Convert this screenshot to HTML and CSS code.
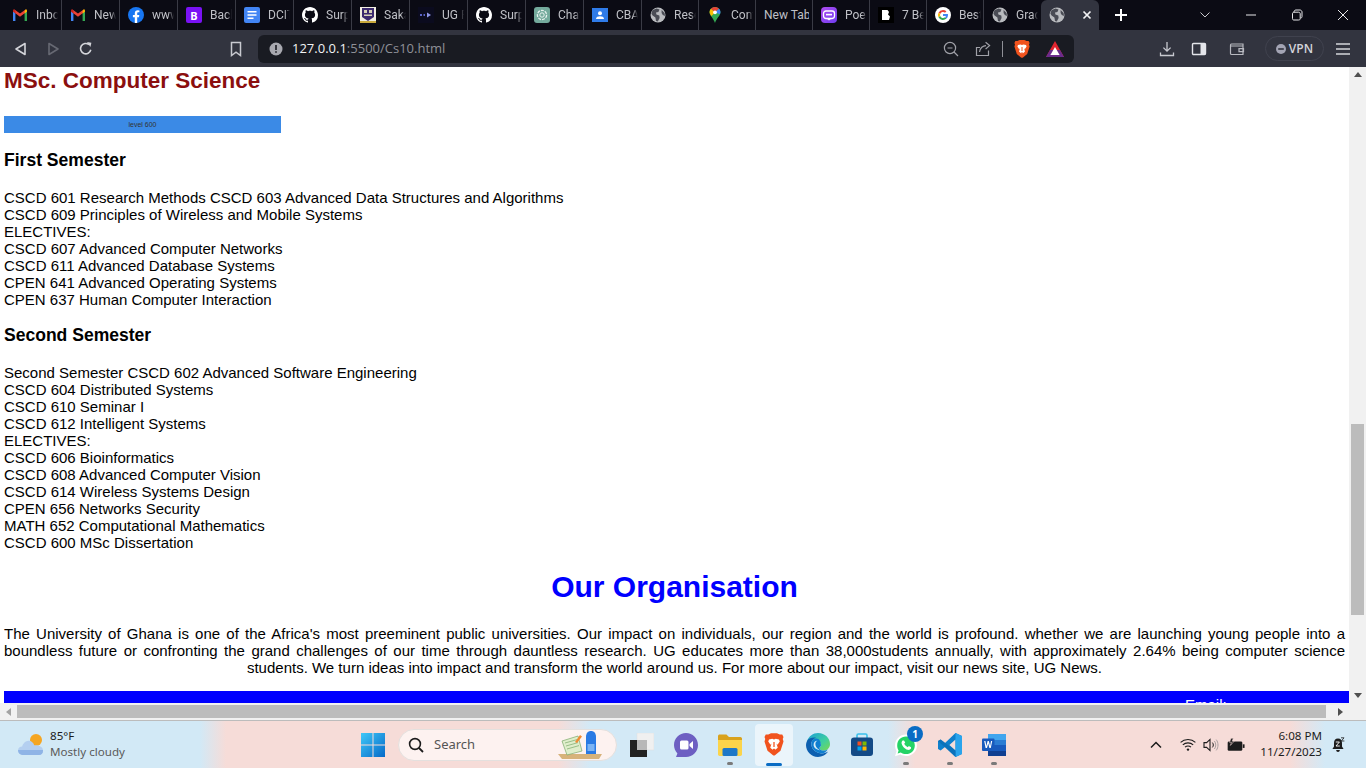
FILE: index.html
```html
<!DOCTYPE html>
<html lang="en">
<head>
<meta charset="utf-8">
<title>Cs10</title>
<link rel="stylesheet" href="styles.css">
</head>
<body>
<svg class="defs" width="0" height="0" aria-hidden="true">
  <symbol id="globe" viewBox="0 0 16 16"><circle cx="8" cy="8" r="7.5" fill="#b9bbbf"/><path d="M2.5 3.2 6.5 1.6 9.5 2.6 8.4 5 6 5.4 6.4 7.6 9.3 8.4 9.6 11 7.8 14.6 6 14 5.4 10.6 2.6 8.4 1.4 6.4Z M11.6 3 14.6 6 15 9 12.8 8 11.6 6Z" fill="#4a4c55"/></symbol>
  <symbol id="gmail" viewBox="0 0 16 14"><path d="M1 13V3.4L3.4 3V13H1Z" fill="#4285f4"/><path d="M12.6 13V3L15 3.4V13H12.6Z" fill="#34a853"/><path d="M1 3.6 2.4 1.4 8 5.6 13.6 1.4 15 3.6 8 8.8Z" fill="#ea4335"/><path d="M12.6 3 13.6 1.4C14.4.8 15 1.6 15 3.4L12.6 5.4Z" fill="#fbbc04"/><path d="M1 3.4C1 1.6 1.6.8 2.4 1.4L3.4 3V5.4L1 3.6Z" fill="#c5221f"/></symbol>
  <symbol id="github" viewBox="0 0 16 16"><path fill="#fff" d="M8 0C3.58 0 0 3.58 0 8c0 3.54 2.29 6.53 5.47 7.59.4.07.55-.17.55-.38 0-.19-.01-.82-.01-1.49-2.01.37-2.53-.49-2.69-.94-.09-.23-.48-.94-.82-1.13-.28-.15-.68-.52-.01-.53.63-.01 1.08.58 1.23.82.72 1.21 1.87.87 2.33.66.07-.52.28-.87.51-1.07-1.78-.2-3.64-.89-3.64-3.95 0-.87.31-1.59.82-2.15-.08-.2-.36-1.02.08-2.12 0 0 .67-.21 2.2.82.64-.18 1.32-.27 2-.27.68 0 1.36.09 2 .27 1.53-1.04 2.2-.82 2.2-.82.44 1.1.16 1.92.08 2.12.51.56.82 1.27.82 2.15 0 3.07-1.87 3.75-3.65 3.95.29.25.54.73.54 1.48 0 1.07-.01 1.93-.01 2.2 0 .21.15.46.55.38A8.013 8.013 0 0016 8c0-4.42-3.58-8-8-8z"/></symbol>
  <symbol id="brave" viewBox="0 0 16 18"><path d="M3.4 1 5.6 0H10.4L12.6 1 14.6.9 15.6 3 15 4.5 15.6 6.6 13.2 14 9 17.4C8.3 18 7.7 18 7 17.4L2.8 14 .4 6.6 1 4.5.4 3 1.4.9Z" fill="#f1531e"/><path d="M4 5 6.6 4.4 8 5 9.4 4.4 12 5 12.6 6.6 10.8 9.2 10 8.2 11 11.6 8.8 13.4H7.2L5 11.6 6 8.2 5.2 9.2 3.4 6.6Z" fill="#fff"/><path d="M6.8 13 8 12.2 9.2 13 8 14.6Z M7.5 7H8.5V11H7.5Z" fill="#f1531e"/></symbol>
</svg>

<header class="tabstrip">
  <div class="tab"><svg class="fav"><use href="#gmail"/></svg><span class="tab-title">Inbox (12)</span></div>
  <div class="tab"><svg class="fav"><use href="#gmail"/></svg><span class="tab-title">New Inbox</span></div>
  <div class="tab"><svg class="fav" viewBox="0 0 16 16"><circle cx="8" cy="8" r="8" fill="#1877f2"/><path d="M6.8 16V10.2H4.9V8H6.8V6.3C6.8 4.3 8 3.2 9.8 3.2L11.4 3.4V5.2H10.4C9.5 5.2 9.2 5.8 9.2 6.4V8H11.3L11 10.2H9.2V16Z" fill="#fff"/></svg><span class="tab-title">www.face</span></div>
  <div class="tab"><span class="fav fav-boot">B</span><span class="tab-title">Background</span></div>
  <div class="tab"><svg class="fav" viewBox="0 0 16 16"><rect width="16" height="16" rx="2" fill="#4285f4"/><path d="M3.5 4H12.5V5.6H3.5ZM3.5 7.2H12.5V8.8H3.5ZM3.5 10.4H9.5V12H3.5Z" fill="#fff"/></svg><span class="tab-title">DCIT 4</span></div>
  <div class="tab"><svg class="fav"><use href="#github"/></svg><span class="tab-title">Surprise</span></div>
  <div class="tab"><svg class="fav" viewBox="0 0 16 16"><rect width="16" height="16" fill="#f2efe2"/><path d="M2 1H14V10L8 14 2 10Z" fill="#3c2a6e"/><path d="M4 3H7V6H4ZM9 3H12V6H9ZM4 7.5H12V9H4Z" fill="#d8d2b8"/><rect y="14" width="16" height="2" fill="#c9a93c"/></svg><span class="tab-title">Sakai</span></div>
  <div class="tab"><svg class="fav" viewBox="0 0 16 16"><rect width="16" height="16" fill="#0b0b1e"/><path d="M2 7H4V9H2ZM5.5 7H7V9H5.5Z" fill="#5a63c8"/><path d="M9 5.6 13 8 9 10.4Z" fill="#8f96e8"/></svg><span class="tab-title">UG Portal</span></div>
  <div class="tab"><svg class="fav"><use href="#github"/></svg><span class="tab-title">Surprise</span></div>
  <div class="tab"><svg class="fav" viewBox="0 0 16 16"><rect width="16" height="16" rx="3" fill="#74aa9c"/><circle cx="8" cy="8" r="4.6" fill="none" stroke="#e8f2ef" stroke-width="1.3" stroke-dasharray="3 1"/><circle cx="8" cy="8" r="2.2" fill="none" stroke="#e8f2ef"/></svg><span class="tab-title">ChatGPT</span></div>
  <div class="tab"><svg class="fav" viewBox="0 0 16 16"><rect y="1" width="16" height="14" fill="#2f7be8"/><circle cx="8" cy="6.2" r="2" fill="#fff"/><path d="M4 12C4 9.8 6 9.2 8 9.2S12 9.8 12 12Z" fill="#fff"/></svg><span class="tab-title">CBAS</span></div>
  <div class="tab tab-n"><svg class="fav"><use href="#globe"/></svg><span class="tab-title">Research</span></div>
  <div class="tab tab-n"><svg class="fav" viewBox="0 0 16 16"><path d="M8 0C11 0 13.4 2.3 13.4 5.3 13.4 9 9.6 11 8 16 6.4 11 2.6 9 2.6 5.3 2.6 2.3 5 0 8 0Z" fill="#34a853"/><path d="M4 1.8 8 5.3 4.6 9C3.4 7.6 2.6 6.6 2.6 5.3 2.6 3.9 3.1 2.7 4 1.8Z" fill="#fbbc04"/><path d="M4 1.8C5 .7 6.4 0 8 0 9.6 0 11 .7 12 1.8L8 5.3Z" fill="#ea4335"/><path d="M12 1.8C12.9 2.7 13.4 3.9 13.4 5.3 13.4 6 13.2 6.6 12.9 7.2L8 5.3Z" fill="#4285f4"/><circle cx="8" cy="5.3" r="1.9" fill="#fff"/></svg><span class="tab-title">Contact</span></div>
  <div class="tab tab-n"><span class="tab-title tab-plain">New Tab</span></div>
  <div class="tab tab-n"><svg class="fav" viewBox="0 0 16 16"><defs><linearGradient id="poe" x1="0" y1="0" x2="1" y2="1"><stop offset="0" stop-color="#b04cf0"/><stop offset="1" stop-color="#6f3df0"/></linearGradient></defs><rect width="16" height="16" rx="4" fill="url(#poe)"/><rect x="2.5" y="4" width="11" height="7.5" rx="2.4" fill="none" stroke="#fff" stroke-width="1.3"/><rect x="5" y="6.8" width="6" height="1.6" fill="#fff"/><path d="M5.5 11.5H10.5L8 13.4Z" fill="#fff"/></svg><span class="tab-title">Poe</span></div>
  <div class="tab tab-n"><svg class="fav" viewBox="0 0 16 16"><rect width="16" height="16" fill="#000"/><path d="M4 3H9.5L11 5 10 7.5 12 9.5 11 13H4Z" fill="#fff"/></svg><span class="tab-title">7 Best</span></div>
  <div class="tab tab-n"><svg class="fav" viewBox="0 0 16 16"><circle cx="8" cy="8" r="8" fill="#fff"/><path d="M8 3A5 5 0 0 1 11.4 4.3L10 5.7A3 3 0 0 0 5.2 7L3.5 5.7A5 5 0 0 1 8 3Z" fill="#ea4335"/><path d="M3.5 5.7 5.2 7A3 3 0 0 0 5.2 9L3.5 10.3A5 5 0 0 1 3.5 5.7Z" fill="#fbbc04"/><path d="M3.5 10.3 5.2 9A3 3 0 0 0 10 10.3L11.5 11.6A5 5 0 0 1 3.5 10.3Z" fill="#34a853"/><path d="M13 8C13 9.6 12.4 10.8 11.5 11.6L10 10.3C10.5 9.9 10.8 9.4 10.9 8.9H8V7H12.9Z" fill="#4285f4"/></svg><span class="tab-title">Best web</span></div>
  <div class="tab tab-n tab-last"><svg class="fav"><use href="#globe"/></svg><span class="tab-title">Graduate</span></div>
  <div class="tab tab-active"><svg class="fav"><use href="#globe"/></svg><svg class="tab-close" viewBox="0 0 10 10"><path d="M1.5 1.5 8.5 8.5M8.5 1.5 1.5 8.5" stroke="#f2f2f4" stroke-width="1.7"/></svg></div>
  <svg class="new-tab" viewBox="0 0 14 14"><path d="M7 1V13M1 7H13" stroke="#fff" stroke-width="2"/></svg>
  <svg class="win-btn win-chevron" viewBox="0 0 12 12"><path d="M1.5 3.5 6 8 10.5 3.5" fill="none" stroke="#c8c9cc"/></svg>
  <svg class="win-btn win-min" viewBox="0 0 12 12"><path d="M1 6H11" stroke="#e8e8ea"/></svg>
  <svg class="win-btn win-max" viewBox="0 0 12 12"><path d="M3 3.5C3 2 3.5 1 5 1H9C10 1 11 2 11 3V7.5C11 8.5 10.5 9 9.5 9M1.5 5C1.5 3.8 2 3.2 3 3.2H7.6C8.6 3.2 9.2 3.8 9.2 5V9.6C9.2 10.6 8.6 11 7.6 11H3C2 11 1.5 10.6 1.5 9.6Z" fill="none" stroke="#e8e8ea"/></svg>
  <svg class="win-btn win-close" viewBox="0 0 12 12"><path d="M1 1 11 11M11 1 1 11" stroke="#e8e8ea"/></svg>
</header>

<nav class="toolbar">
  <button class="tb-btn"><svg viewBox="0 0 16 16"><path d="M12 2.5V13.5L3 8Z" fill="none" stroke="#d4d5da" stroke-width="1.6" stroke-linejoin="round"/></svg></button>
  <button class="tb-btn"><svg viewBox="0 0 16 16"><path d="M4 2.5V13.5L13 8Z" fill="none" stroke="#676973" stroke-width="1.6" stroke-linejoin="round"/></svg></button>
  <button class="tb-btn tb-reload"><svg viewBox="0 0 16 16"><path d="M12.8 8.8A5.2 5.2 0 1 1 11 3.6" fill="none" stroke="#d4d5da" stroke-width="1.6"/><path d="M9 1 13.4 1.8 12.4 6Z" fill="#d4d5da"/></svg></button>
  <button class="tb-btn tb-bookmark"><svg viewBox="0 0 16 16"><path d="M3.5 1.5H12.5V14.5L8 11.2 3.5 14.5Z" fill="none" stroke="#c8c9d0" stroke-width="1.5"/></svg></button>
  <div class="urlbar">
    <svg class="url-info" viewBox="0 0 14 14"><circle cx="7" cy="7" r="6.5" fill="#a8a9b0"/><path d="M6.2 3H7.8V8H6.2ZM6.2 9.2H7.8V10.8H6.2Z" fill="#191b22"/></svg>
    <span class="url-text"><span class="url-host">127.0.0.1</span>:5500/Cs10.html</span>
    <svg class="url-ic url-zoom" viewBox="0 0 16 16"><circle cx="7" cy="7" r="5.6" fill="none" stroke="#a0a1a8" stroke-width="1.2"/><path d="M4.5 7H9.5M11 11 15 15" stroke="#a0a1a8" stroke-width="1.2"/></svg>
    <svg class="url-ic url-share" viewBox="0 0 16 16"><path d="M13.5 9.5V14.5H1.5V6.5H5" fill="none" stroke="#a0a1a8" stroke-width="1.2"/><path d="M4.5 11C5 7 8 4.6 11 4.6M10.6 1.2 14.6 4.6 10.6 8" fill="none" stroke="#a0a1a8" stroke-width="1.2"/></svg>
    <span class="url-sep"></span>
    <svg class="url-brave"><use href="#brave"/></svg>
    <svg class="url-bat" viewBox="0 0 18 16"><path d="M9 0 18 16H0Z" fill="#e0252f"/><path d="M0 16 4 9H14L18 16Z" fill="#6a2b8c"/><path d="M9 6 13.6 14H4.4Z" fill="#fff"/></svg>
  </div>
  <button class="tb-btn tb-download"><svg viewBox="0 0 16 16"><path d="M8 1V10M4.4 6.6 8 10.2 11.6 6.6M1.5 11.5V14.5H14.5V11.5" fill="none" stroke="#c8c9d0" stroke-width="1.3"/></svg></button>
  <button class="tb-btn"><svg viewBox="0 0 16 16"><rect x="1.5" y="2.5" width="13" height="11" rx="1" fill="none" stroke="#e4e5ea" stroke-width="1.4"/><rect x="9.5" y="2.5" width="5" height="11" fill="#e4e5ea"/></svg></button>
  <button class="tb-btn tb-wallet"><svg viewBox="0 0 16 16"><path d="M14 5V3H2.5C1.5 3 1.5 4 1.5 5V12.5C1.5 13.3 2 13.5 2.6 13.5H14V5H2" fill="none" stroke="#b8b9c0" stroke-width="1.2"/><path d="M10 7.6H14.5V10.6H10Z" fill="none" stroke="#b8b9c0" stroke-width="1.2"/></svg></button>
  <div class="vpn"><svg class="vpn-dot" viewBox="0 0 10 10"><circle cx="5" cy="5" r="5" fill="#a3a4b4"/><rect x="2.2" y="4.2" width="5.6" height="1.6" fill="#32343f"/></svg>VPN</div>
  <button class="tb-btn tb-menu"><svg viewBox="0 0 16 16"><path d="M1 3H15M1 8H15M1 13H15" stroke="#d4d5da" stroke-width="1.4"/></svg></button>
</nav>

<div class="viewport">
  <main class="page">
    <h1 class="degree">MSc. Computer Science</h1>
    <div class="level">level 600</div>
    <h3 class="sem sem-first">First Semester</h3>
    <p class="courses">CSCD 601 Research Methods CSCD 603 Advanced Data Structures and Algorithms<br>
    CSCD 609 Principles of Wireless and Mobile Systems<br>
    ELECTIVES:<br>
    CSCD 607 Advanced Computer Networks<br>
    CSCD 611 Advanced Database Systems<br>
    CPEN 641 Advanced Operating Systems<br>
    CPEN 637 Human Computer Interaction</p>
    <h3 class="sem sem-second">Second Semester</h3>
    <p class="courses">Second Semester CSCD 602 Advanced Software Engineering<br>
    CSCD 604 Distributed Systems<br>
    CSCD 610 Seminar I<br>
    CSCD 612 Intelligent Systems<br>
    ELECTIVES:<br>
    CSCD 606 Bioinformatics<br>
    CSCD 608 Advanced Computer Vision<br>
    CSCD 614 Wireless Systems Design<br>
    CPEN 656 Networks Security<br>
    MATH 652 Computational Mathematics<br>
    CSCD 600 MSc Dissertation</p>
    <h2 class="org">Our Organisation</h2>
    <p class="about">The University of Ghana is one of the Africa's most preeminent public universities. Our impact on individuals, our region and the world is profound. whether we are launching young people into a boundless future or confronting the grand challenges of our time through dauntless research. UG educates more than 38,000students annually, with approximately 2.64% being computer science students. We turn ideas into impact and transform the world around us. For more about our impact, visit our news site, UG News.</p>
    <footer class="foot"><span class="foot-email">Email:</span></footer>
  </main>
  <div class="vscroll">
    <span class="arrow arrow-up"></span>
    <span class="vthumb"></span>
    <span class="arrow arrow-down"></span>
  </div>
</div>
<div class="hscroll">
  <span class="arrow arrow-left"></span>
  <span class="hthumb"></span>
  <span class="arrow arrow-right"></span>
  <span class="corner"></span>
</div>

<footer class="taskbar">
  <div class="weather">
    <svg class="weather-ic" viewBox="0 0 26 22"><circle cx="18" cy="6" r="6" fill="#f5a623"/><path d="M6 21C2 21 0 19 0 16.4 0 14 2 12.4 4.2 12.4 5 9.6 7.6 6.6 11 6.8 14 7 15.8 9.4 16.2 11.4 19 10.8 25 12 25 16.6 25 19.6 23.6 21 21 21Z" fill="#b4cff0"/><path d="M0 16H25L25 16.6C25 19.6 23.6 21 21 21H6C2 21 0 19 0 16Z" fill="#8fb4e6"/></svg>
    <div class="weather-text"><span class="temp">85°F</span><span class="cond">Mostly cloudy</span></div>
  </div>
  <div class="slot"><svg class="ic24" viewBox="0 0 24 24"><defs><linearGradient id="winb" x1="0" y1="0" x2="1" y2="1"><stop offset="0" stop-color="#3fc8f8"/><stop offset="1" stop-color="#0569c8"/></linearGradient></defs><path d="M0 0H11.5V11.5H0ZM12.5 0H24V11.5H12.5ZM0 12.5H11.5V24H0ZM12.5 12.5H24V24H12.5Z" fill="url(#winb)"/></svg></div>
  <div class="search">
    <svg class="search-ic" viewBox="0 0 16 16"><circle cx="7" cy="7" r="5.4" fill="none" stroke="#1c1c1c" stroke-width="1.6"/><path d="M11 11 15 15" stroke="#1c1c1c" stroke-width="1.8"/></svg>
    <span class="search-text">Search</span>
    <svg class="search-art" viewBox="0 0 44 30"><path d="M0 24H44L41 29H4Z" fill="#d7b27a"/><path d="M4 11 20 6 24 21 9 25Z" fill="#dfeecb" stroke="#7aa868" stroke-width=".7"/><path d="M7 13 19 9.6M8 16 20 12.6M9 19 21 15.6" stroke="#7aa868" stroke-width=".7"/><path d="M17 12 22 5 24 6.4 19 13Z" fill="#f08a34"/><path d="M28 7C28 3 30 1 33 1S38 3 38 7V24H28Z" fill="#2a7ae4"/><rect x="29.5" y="14" width="7" height="7" fill="#7db4f4"/></svg>
  </div>
  <div class="slot slot-first"><svg class="ic24" viewBox="0 0 24 24"><rect x="7" y="0" width="17" height="17" fill="#f0f0f0" stroke="#dedede" stroke-width=".5"/><rect x="0" y="7" width="17" height="17" fill="#222"/><rect x="7" y="7" width="10" height="10" fill="#b8b8b8"/></svg></div>
  <div class="slot"><svg class="ic24" viewBox="0 0 24 24"><path d="M12 0C18.6 0 24 5.2 24 12S18.6 24 12 24H2L3.4 20.4C1.2 18 0 15.2 0 12 0 5.2 5.4 0 12 0Z" fill="#6d5fc2"/><rect x="6" y="7.5" width="8.5" height="9" rx="1.5" fill="#fff"/><path d="M15.5 11 19 8V16L15.5 13Z" fill="#fff"/></svg></div>
  <div class="slot"><svg class="ic24" viewBox="0 0 24 24"><path d="M0 3C0 2 .8 1.4 1.6 1.4H8.4L11 4H22.4C23.2 4 24 4.8 24 5.6V8H0Z" fill="#d9a21d"/><path d="M0 7H24V21.6C24 22.4 23.2 23 22.4 23H1.6C.8 23 0 22.4 0 21.6Z" fill="#fbd44a"/><rect x="4.5" y="15" width="15" height="8" rx="1.5" fill="#1d78c8"/></svg><span class="dot"></span></div>
  <div class="slot slot-active"><svg class="ic-brave"><use href="#brave"/></svg><span class="active-bar"></span></div>
  <div class="slot"><svg class="ic24" viewBox="0 0 24 24"><defs><linearGradient id="edge" x1="0" y1="0" x2="1" y2="1"><stop offset="0" stop-color="#1a9fd8"/><stop offset=".6" stop-color="#3fcf9e"/><stop offset="1" stop-color="#7ad84e"/></linearGradient></defs><path d="M1 8C3 3 7 0 12 0 19 0 24 5 24 11 24 15 21 17.6 18 17.6 15.4 17.6 13.6 16.6 13.4 15 13.4 14 14.6 13.6 15 12.4 15.4 10 13 7.4 10 7.4 6 7.4 3 7.6 1 8Z" fill="url(#edge)"/><path d="M1 8C3 5 7 4.2 10 4.8 7 5.6 5 8.6 5.4 12 6 17 11 20.4 16 20.4 18.4 20.4 20.4 19.8 22 18.6 20 22 16 24 12 24 5 24 0 18 0 12 0 10.6.4 9.2 1 8Z" fill="#0c5fb0"/><path d="M5.4 12C5 8.6 7 5.6 10 5.4 13 5.2 15 8 15 12.4 14.6 13.6 13.4 14 13.4 15 13.6 16.6 15.4 17.6 18 17.6 19.4 17.6 20.8 17 22 16 20 19 18.4 20.4 16 20.4 11 20.4 6 17 5.4 12Z" fill="#0f7ed0"/><path d="M7.6 12C7.6 9 9.6 7.6 11.4 7.8 9.6 8.6 9 10.6 9.6 12.6 10.2 14.6 12 16.4 14 17.2 10.6 16.8 7.6 14.6 7.6 12Z" fill="#d6ecf6"/></svg></div>
  <div class="slot"><svg class="ic24" viewBox="0 0 24 24"><path d="M7 5V2.4C7 1.4 7.6 1 8.4 1H15.6C16.4 1 17 1.4 17 2.4V5" fill="none" stroke="#3ac0ec" stroke-width="1.6"/><rect x="1" y="4.5" width="22" height="18.5" rx="3" fill="#134a86"/><rect x="7.5" y="8.5" width="4" height="4" fill="#f25022"/><rect x="12.5" y="8.5" width="4" height="4" fill="#7fba00"/><rect x="7.5" y="13.5" width="4" height="4" fill="#00a4ef"/><rect x="12.5" y="13.5" width="4" height="4" fill="#ffb900"/></svg></div>
  <div class="slot"><svg class="ic24" viewBox="0 0 24 24"><path d="M12 1.5C18 1.5 23 6.4 23 12.4S18 23 12 23C10 23 8.2 22.6 6.4 21.6L1 23.2 2.6 18C1.6 16.2 1 14.4 1 12.4 1 6.4 6 1.5 12 1.5Z" fill="#fff"/><path d="M12 3.6C17 3.6 20.8 7.4 20.8 12.4S17 21 12 21C10 21 8.4 20.4 6.8 19.4L3.6 20.4 4.6 17.4C3.6 15.8 3.2 14.2 3.2 12.4 3.2 7.4 7 3.6 12 3.6Z" fill="#25d366"/><path d="M8.6 7.4C8 8 7.4 9 7.6 10.4 8 12.6 10.6 15.8 13.6 16.8 15 17.2 16.2 16.8 17 15.6L17 14.2 14.8 13 13.8 14.2C12.4 13.8 10.8 12 10.2 10.8L11.2 9.6 10 7.4Z" fill="#fff"/></svg><span class="badge">1</span><span class="dot"></span></div>
  <div class="slot"><svg class="ic24" viewBox="0 0 24 24"><path d="M17.5 0 24 3V21L17.5 24 7 14 2.6 17.4 0 16V8L2.6 6.6 7 10ZM17.5 6.6 11.4 12 17.5 17.4Z" fill="#0f80cc"/><path d="M17.5 0 24 3V21L17.5 24Z" fill="#2aa4ec"/><path d="M0 8 2.6 6.6 17.5 17.4V24L0 8Z" fill="#0b6cb4" opacity=".7"/></svg><span class="dot"></span></div>
  <div class="slot"><svg class="ic24" viewBox="0 0 24 24"><rect x="6" y="1" width="18" height="22" rx="1" fill="#2b7cd3"/><rect x="6" y="1" width="18" height="6" fill="#41a5ee"/><rect x="6" y="12" width="18" height="6" fill="#185abd"/><rect x="6" y="18" width="18" height="5" fill="#103f91"/><rect x="0" y="5.5" width="12.5" height="12.5" rx="1" fill="#185abd"/><path d="M2.2 8 3.6 15H5L6.2 10.6 7.4 15H8.8L10.2 8H9L8.1 13 6.8 8H5.6L4.4 13 3.4 8Z" fill="#fff"/></svg><span class="dot"></span></div>
  <div class="tray">
    <svg class="tray-caret" viewBox="0 0 12 8"><path d="M1 6.5 6 1.5 11 6.5" fill="none" stroke="#1c1c1c" stroke-width="1.5"/></svg>
    <svg class="tray-wifi" viewBox="0 0 16 13"><path d="M.6 4.4C4.6.6 11.4.6 15.4 4.4M2.8 6.8C5.6 4.2 10.4 4.2 13.2 6.8M5 9.2C6.6 7.8 9.4 7.8 11 9.2" fill="none" stroke="#1c1c1c" stroke-width="1.1"/><circle cx="8" cy="11.6" r="1.2" fill="#1c1c1c"/></svg>
    <svg class="tray-vol" viewBox="0 0 16 14"><path d="M1 4.6H3.6L7 1.4V12.6L3.6 9.4H1Z" fill="none" stroke="#1c1c1c" stroke-width="1.1"/><path d="M9.4 4.6C10.6 6 10.6 8 9.4 9.4" fill="none" stroke="#1c1c1c"/><path d="M11.4 3C13.2 5.2 13.2 8.8 11.4 11M13.2 1.6C15.6 4.6 15.6 9.4 13.2 12.4" fill="none" stroke="#a8a0a0"/></svg>
    <svg class="tray-bat" viewBox="0 0 16 12"><rect x=".6" y="2.8" width="13" height="8.4" rx="1.2" fill="#1c1c1c"/><rect x="14" y="5.4" width="1.6" height="3.2" fill="#1c1c1c"/><path d="M3.6 0 2.2 3.6H4L3 6.4 6.4 2.6H4.6L5.6 0Z" fill="#1c1c1c" stroke="#f7dcd8" stroke-width=".5"/></svg>
    <div class="clock"><span>6:08 PM</span><span>11/27/2023</span></div>
    <svg class="tray-bell" viewBox="0 0 14 16"><path d="M7 1.6C4.2 1.6 3 3.6 3 6V9.6L1.4 12H12.6L11 9.6V6C11 3.6 9.8 1.6 7 1.6Z" fill="#1c1c1c"/><path d="M5.2 13H8.8C8.8 14.2 8 15 7 15S5.2 14.2 5.2 13Z" fill="#1c1c1c"/><path d="M4.8 5H8.4L5 9H8.8" fill="none" stroke="#fff" stroke-width=".9"/><path d="M10 .8H13L10.4 4H13.4" fill="none" stroke="#1c1c1c" stroke-width=".8"/></svg>
  </div>
</footer>
</body>
</html>
```

FILE: styles.css
```css
* { box-sizing: border-box; }
html, body { margin: 0; padding: 0; }
body {
  width: 1366px;
  height: 768px;
  overflow: hidden;
  display: flex;
  flex-direction: column;
  background: #fff;
  font-family: "Liberation Sans", Arial, sans-serif;
}
.defs { position: absolute; }

/* tab strip */
.tabstrip {
  height: 30px;
  flex: none;
  display: flex;
  align-items: center;
  padding-left: 4px;
  background: #0b0b14;
}
.tab {
  width: 58px;
  height: 30px;
  flex: none;
  display: flex;
  align-items: center;
  padding: 0 4px 0 8px;
  position: relative;
  overflow: hidden;
  border-right: 1px solid #3a3b45;
}
.tab-n { width: 57px; }
.tab-last, .tab-active { border-right: 0; }
.fav { width: 16px; height: 16px; flex: none; }
.fav-boot {
  display: flex;
  align-items: center;
  justify-content: center;
  background: #7a12f5;
  color: #fff;
  border-radius: 2px;
  font: 700 11px "Noto Sans", sans-serif;
}
.tab-title {
  margin-left: 8px;
  flex: none;
  width: 22px;
  overflow: hidden;
  white-space: nowrap;
  font: 12px Roboto, "Open Sans", sans-serif;
  color: #bfc0c6;
  -webkit-mask-image: linear-gradient(to right, #000 75%, transparent);
  mask-image: linear-gradient(to right, #000 75%, transparent);
}
.tab-plain {
  margin-left: 0;
  width: 45px;
  -webkit-mask-image: none;
  mask-image: none;
}
.tab-active {
  width: 58px;
  height: 30px;
  background: #32343f;
  border-radius: 6px 6px 0 0;
}
.tab-close { width: 10px; height: 10px; margin-left: 17px; }
.new-tab { width: 14px; height: 14px; margin-left: 15px; flex: none; }
.win-btn { width: 12px; height: 12px; flex: none; }
.win-chevron { margin-left: 71px; }
.win-min { margin-left: 34px; }
.win-max { margin-left: 34px; }
.win-close { margin-left: 34px; }

/* toolbar */
.toolbar {
  height: 37px;
  flex: none;
  display: flex;
  align-items: center;
  padding-left: 5px;
  background: #32343f;
}
.tb-btn {
  width: 32px;
  height: 28px;
  flex: none;
  padding: 0;
  border: 0;
  background: none;
  display: flex;
  align-items: center;
  justify-content: center;
}
.tb-btn svg { width: 16px; height: 16px; }
.tb-reload { margin-left: 1px; }
.tb-bookmark { margin-left: 118px; }
.urlbar {
  width: 816px;
  height: 28px;
  margin-left: 6px;
  flex: none;
  display: flex;
  align-items: center;
  padding-left: 11px;
  background: #191b22;
  border-radius: 6px;
}
.url-info { width: 14px; height: 14px; flex: none; }
.url-text {
  margin: 0 0 2px 9px;
  width: 651px;
  flex: none;
  font: 13px "Open Sans", "Noto Sans", sans-serif;
  color: #8f9097;
  white-space: nowrap;
}
.url-host { color: #f2f2f4; }
.url-ic { width: 16px; height: 16px; flex: none; }
.url-zoom { margin-left: 0; }
.url-share { margin-left: 16px; }
.url-sep { width: 1px; height: 16px; margin-left: 11px; background: #8f9097; flex: none; }
.url-brave { width: 16px; height: 18px; margin-left: 11px; flex: none; }
.url-bat { width: 18px; height: 16px; margin-left: 16px; flex: none; }
.tb-download { margin-left: 77px; }
.tb-btn.tb-wallet { margin-left: 6px; }
.vpn {
  width: 59px;
  height: 25px;
  margin-left: 12px;
  flex: none;
  display: flex;
  align-items: center;
  justify-content: center;
  gap: 3px;
  border: 1px solid #40424e;
  border-radius: 13px;
  font: 600 12px "Open Sans", "Noto Sans", sans-serif;
  color: #d4d5da;
}
.vpn-dot { width: 10px; height: 10px; flex: none; }
.tb-menu { margin-left: 3px; }

/* page */
.viewport {
  height: 636px;
  flex: none;
  display: flex;
  overflow: hidden;
}
.page {
  width: 1349px;
  flex: none;
  overflow: hidden;
  padding-left: 4px;
  color: #000;
  font-size: 15px;
  line-height: 17px;
}
.degree {
  margin: 0;
  font-size: 22.5px;
  line-height: 27px;
  font-weight: 700;
  color: #8b0f0f;
}
.level {
  width: 277px;
  height: 17px;
  margin-top: 22px;
  background: #3b8ae6;
  color: #333;
  font-size: 7px;
  line-height: 17px;
  text-align: center;
}
.sem {
  margin: 0;
  font-size: 17.55px;
  line-height: 21px;
  font-weight: 700;
}
.sem-first { margin-top: 17px; }
.sem-second { margin-top: 17px; }
.courses { margin: 18px 0 0; }
.org {
  margin: 17px 0 0;
  width: 1341px;
  font-size: 30px;
  line-height: 37px;
  font-weight: 700;
  color: #0000ff;
  text-align: center;
}
.about {
  width: 1341px;
  margin: 20px 0 0;
  text-align: justify;
  text-align-last: center;
}
.foot {
  height: 40px;
  margin-top: 15px;
  padding: 5px 0 0 1181px;
  background: #0000ff;
  color: #fff;
  font-size: 15px;
}

/* scrollbars */
.vscroll {
  width: 17px;
  flex: none;
  display: flex;
  flex-direction: column;
  align-items: center;
  background: #f1f1f1;
}
.vthumb {
  width: 13px;
  height: 191px;
  margin-top: 347px;
  margin-bottom: auto;
  background: #bcbcbc;
}
.arrow { width: 0; height: 0; flex: none; border: 4px solid transparent; }
.arrow-up { margin-top: 5px; border-top: 0; border-bottom: 5px solid #505050; }
.arrow-down { margin-bottom: 5px; border-bottom: 0; border-top: 5px solid #505050; }
.arrow-left { margin-left: 6px; border-left: 0; border-right: 5px solid #a3a3a3; }
.arrow-right { margin-left: 12px; border-right: 0; border-left: 5px solid #505050; }
.hscroll {
  height: 17px;
  flex: none;
  display: flex;
  align-items: center;
  background: #f1f1f1;
}
.hthumb { width: 1309px; height: 13px; margin-left: 6px; background: #bcbcbc; }
.corner { width: 17px; height: 17px; margin-left: auto; background: #f1f1f1; }

/* taskbar */
.taskbar {
  height: 48px;
  flex: none;
  display: flex;
  align-items: center;
  border-top: 1px solid #bcbcbc;
  background: linear-gradient(to right,
    #d2e9f6 0, #d2e9f6 200px, #f6dcd8 226px, #f6dcd8 558px,
    #d3e9f6 590px, #d3e9f6 888px, #f6dcd8 915px, #f6dcd8 1290px, #d3e9f6 1325px);
  font-family: "Noto Sans", "Open Sans", sans-serif;
  color: #1c1c1c;
}
.weather { width: 351px; flex: none; display: flex; align-items: center; padding-left: 18px; }
.weather-ic { width: 26px; height: 22px; flex: none; }
.weather-text { margin: 0 0 2px 6px; display: flex; flex-direction: column; font-size: 11.6px; line-height: 16px; }
.temp { color: #1c1c1c; }
.cond { color: #5a5a5a; }
.slot {
  width: 44px;
  height: 42px;
  flex: none;
  position: relative;
  display: flex;
  align-items: center;
  justify-content: center;
}
.slot-first { margin-left: 3px; }
.slot-active {
  width: 38px;
  margin: 0 3px;
  background: rgba(255,255,255,.55);
  border-radius: 4px;
}
.ic24 { width: 24px; height: 24px; }
.ic-brave { width: 20px; height: 25px; }
.dot {
  position: absolute;
  left: 19px;
  bottom: 1px;
  width: 6px;
  height: 3px;
  border-radius: 2px;
  background: #7a7a7a;
}
.active-bar {
  position: absolute;
  left: 11px;
  bottom: 0;
  width: 16px;
  height: 3px;
  border-radius: 2px;
  background: #0a6cc4;
}
.badge {
  position: absolute;
  left: 23px;
  top: 2px;
  width: 16px;
  height: 16px;
  border-radius: 50%;
  background: #0a6cc4;
  color: #fff;
  font-size: 10px;
  font-weight: 700;
  line-height: 16px;
  text-align: center;
}
.search {
  width: 219px;
  height: 32px;
  margin-left: 3px;
  flex: none;
  display: flex;
  align-items: center;
  padding-left: 9px;
  background: #fdf2f0;
  border: 1px solid #e4e0de;
  border-radius: 16px;
}
.search-ic { width: 16px; height: 16px; flex: none; }
.search-text { margin: 0 0 2px 10px; width: 124px; flex: none; font-size: 13px; color: #555; }
.search-art { width: 44px; height: 30px; margin-left: 0; flex: none; }
.tray { margin-left: 134px; flex: none; display: flex; align-items: center; }
.tray-caret { width: 12px; height: 8px; flex: none; }
.tray-wifi { width: 16px; height: 13px; margin-left: 18px; flex: none; }
.tray-vol { width: 16px; height: 14px; margin-left: 7px; flex: none; }
.tray-bat { width: 18px; height: 14px; margin-left: 8px; flex: none; }
.clock {
  width: 70px;
  margin: 0 0 2px 7px;
  flex: none;
  display: flex;
  flex-direction: column;
  align-items: flex-end;
  font-size: 11.6px;
  line-height: 16px;
}
.tray-bell { width: 14px; height: 16px; margin-left: 9px; flex: none; }
```
